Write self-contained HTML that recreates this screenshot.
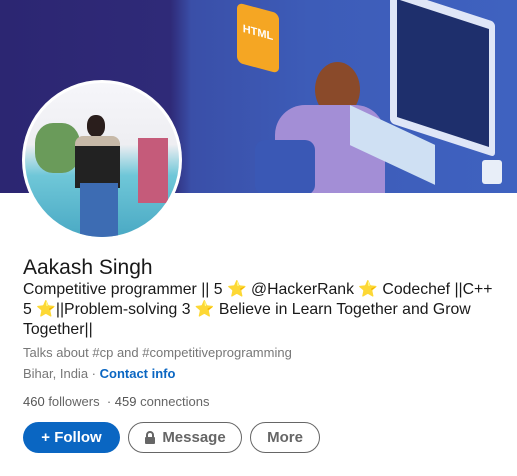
<!DOCTYPE html>
<html><head><style>
body{margin:0;width:517px;height:476px;overflow:hidden;background:#fff;font-family:"Liberation Sans",sans-serif;position:relative}
.banner{position:absolute;left:0;top:0;width:517px;height:193px;background:linear-gradient(90deg,#2c2672 0%,#2f2a78 33%,#3a4fa8 37%,#3d5cb8 60%,#3f62c0 100%);overflow:hidden}
.av{position:absolute;left:22px;top:80px;width:160px;height:160px;border-radius:50%;background:#fff;overflow:hidden}
.av .in{position:absolute;left:3px;top:3px;width:154px;height:154px;border-radius:50%;overflow:hidden;background:linear-gradient(180deg,#f6f6fa 0%,#eeeef2 40%,#6fc7d8 60%,#4aa9c4 100%)}
.t{position:absolute;left:23px;white-space:nowrap}
.btn{position:absolute;top:422px;height:31px;border-radius:16px;box-sizing:border-box;font-size:15px;font-weight:bold;display:flex;align-items:center;justify-content:center}
</style></head><body>
<div class="banner">
 <div style="position:absolute;left:237px;top:8px;width:42px;height:60px;background:#f5a623;border-radius:6px;transform:skewY(15deg);color:#fff;font-size:11px;font-weight:bold;text-align:center;line-height:50px">HTML</div>
 <div style="position:absolute;left:390px;top:5px;width:105px;height:135px;background:#dfe6f7;transform:skewY(18deg);border-radius:4px"></div>
 <div style="position:absolute;left:397px;top:14px;width:92px;height:118px;background:#1e2f6c;transform:skewY(18deg)"></div>
 <div style="position:absolute;left:315px;top:62px;width:45px;height:55px;background:#8a4a2a;border-radius:50%"></div>
 <div style="position:absolute;left:275px;top:105px;width:110px;height:90px;background:#a38ed6;border-radius:30px 30px 0 0"></div>
 <div style="position:absolute;left:350px;top:125px;width:85px;height:40px;background:#cfe0f3;transform:skewY(25deg)"></div>
 <div style="position:absolute;left:255px;top:140px;width:60px;height:55px;background:#3a58b5;border-radius:10px"></div>
 <div style="position:absolute;left:482px;top:160px;width:20px;height:24px;background:#e8eef8;border-radius:3px"></div>
</div>
<div class="av"><div class="in">
 <div style="position:absolute;left:10px;top:40px;width:45px;height:50px;background:#6a9b5a;border-radius:40%"></div>
 <div style="position:absolute;left:113px;top:55px;width:30px;height:65px;background:#c55b7a"></div>
 <div style="position:absolute;left:62px;top:32px;width:18px;height:22px;background:#2a1e1c;border-radius:45%"></div>
 <div style="position:absolute;left:50px;top:53px;width:45px;height:42px;background:#222;border-radius:8px 8px 0 0;border-top:10px solid #c7b9a8"></div>
 <div style="position:absolute;left:55px;top:100px;width:38px;height:55px;background:#3d6cb3"></div>
</div></div>
<div class="t" style="top:256px;font-size:21px;color:#191919">Aakash Singh</div>
<div class="t" style="top:280px;font-size:15.8px;line-height:20px;color:#191919">Competitive programmer || 5 ⭐ @HackerRank ⭐ Codechef ||C++<br>5 ⭐||Problem-solving 3 ⭐ Believe in Learn Together and Grow<br>Together||</div>
<div class="t" style="top:345px;font-size:13px;color:#777">Talks about #cp and #competitiveprogramming</div>
<div class="t" style="top:366px;font-size:13px;color:#777">Bihar, India · <span style="color:#0a66c2;font-weight:bold">Contact info</span></div>
<div class="t" style="top:394px;font-size:13px;color:#666"><b style="font-weight:normal;color:#555">460</b> followers &nbsp;· <b style="font-weight:normal;color:#555">459</b> connections</div>
<div class="btn" style="left:23px;width:97px;background:#0a66c2;color:#fff">+ Follow</div>
<div class="btn" style="left:128px;width:114px;border:1px solid #666;color:#666;font-weight:600"><svg width="12" height="13" viewBox="0 0 12 13" style="margin-right:6px"><path d="M3 6V4a3 3 0 0 1 6 0v2" stroke="#666" stroke-width="2" fill="none"/><rect x="1" y="6" width="10" height="7" rx="1" fill="#666"/></svg>Message</div>
<div class="btn" style="left:250px;width:70px;border:1px solid #666;color:#666;font-weight:600">More</div>
</body></html>
